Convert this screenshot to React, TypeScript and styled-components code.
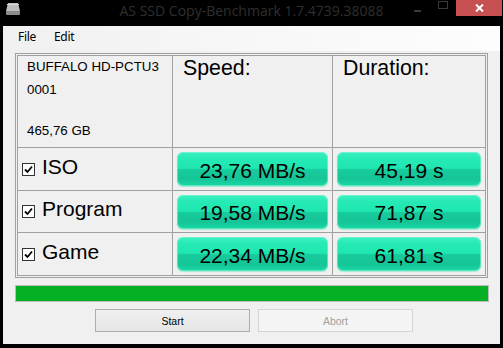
import React from "react";
import styled, { createGlobalStyle } from "styled-components";

const Global = createGlobalStyle`
  html, body { margin: 0; padding: 0; background: #000; }
  body { width: 503px; height: 348px; overflow: hidden; }
`;

const Window = styled.div`
  width: 503px;
  height: 348px;
  background: #000;
  display: flex;
  flex-direction: column;
  font-family: "Liberation Sans", Arial, sans-serif;
`;

const TitleBar = styled.div`
  height: 26px;
  flex: none;
  display: grid;
  grid-template-columns: 1fr auto 1fr;
  align-items: start;
`;

const TitleLeft = styled.div`
  display: flex;
  padding: 2px 0 0 5px;
`;

const TitleText = styled.div`
  font-family: "Open Sans", "Noto Sans", sans-serif;
  font-size: 14px;
  line-height: 19px;
  padding-top: 1px;
  color: #2f2f2f;
  white-space: nowrap;
`;

const Caption = styled.div`
  display: flex;
  justify-content: flex-end;
  padding-right: 1px;
`;

const CapButton = styled.div<{ $w: number; $close?: boolean }>`
  width: ${(p) => p.$w}px;
  height: 16px;
  background: ${(p) => (p.$close ? "#c75050" : "transparent")};
  display: flex;
  align-items: center;
  justify-content: center;
`;

const Client = styled.div`
  flex: 1;
  margin: 0 3px 4px 3px;
  background: #f0f0f0;
  display: flex;
  flex-direction: column;
`;

const MenuBar = styled.div`
  height: 25px;
  flex: none;
  display: flex;
  padding-left: 6px;
  background: linear-gradient(to right, #f0f0f0 0%, #f6f6f6 40%, #fdfdfd 100%);
`;

const MenuItem = styled.div`
  font-family: "Noto Sans", "Open Sans", sans-serif;
  font-size: 12px;
  letter-spacing: -0.3px;
  line-height: 16px;
  padding: 3px 9px 0 9px;
  color: #000;
`;

const Content = styled.div`
  padding: 2px 0 0 12px;
  display: flex;
  flex-direction: column;
`;

const TableFrame = styled.div`
  width: 469px;
  border: 1px solid #a0a0a0;
  padding: 1px;
`;

const Grid = styled.div`
  display: grid;
  grid-template-columns: 154px 159px 152px;
  grid-template-rows: 91px 42px 41px 42px;
  gap: 1px;
  padding: 1px;
  background: #a0a0a0;
`;

const Cell = styled.div`
  background: #f0f0f0;
`;

const DriveCell = styled(Cell)`
  padding: 3px 0 0 9px;
  font-size: 13.33px;
  line-height: 16px;
  color: #000;
`;

const DriveLine = styled.div<{ $gap?: number }>`
  margin-top: ${(p) => p.$gap ?? 0}px;
`;

const HeadCell = styled(Cell)`
  padding-left: 10px;
  font-size: 21.33px;
  line-height: 24px;
  color: #000;
`;

const LabelCell = styled(Cell)`
  display: flex;
  align-items: center;
  padding-left: 4px;
`;

const CheckBox = styled.div`
  width: 11px;
  height: 11px;
  border: 1px solid #333;
  background: #fff;
  display: flex;
  align-items: center;
  justify-content: center;
`;

const Label = styled.div`
  margin: 0 0 5px 7px;
  font-size: 21px;
  line-height: 24px;
  color: #000;
`;

const ValueCell = styled(Cell)`
  display: flex;
  align-items: center;
  padding: 0 4px;
`;

const ValueBox = styled.div`
  flex: 1;
  height: 34px;
  border-radius: 6px;
  display: flex;
  align-items: center;
  justify-content: center;
  font-size: 21px;
  color: #000;
  background: linear-gradient(
    to bottom,
    #3df0c2 0%,
    #26eab5 20%,
    #1fe6b0 48%,
    #17cb9c 52%,
    #15c597 80%,
    #1ad8a6 100%
  );
  box-shadow: inset 0 0 0 1px rgba(150, 245, 215, 0.55), 0 1px 1px rgba(60, 225, 175, 0.45);
`;

const ValueText = styled.span`
  padding-top: 3px;
`;

const Progress = styled.div`
  margin-top: 7px;
  width: 472px;
  height: 15px;
  border: 1px solid #bcbcbc;
  background: #06b025;
`;

const ButtonRow = styled.div`
  margin-top: 7px;
  display: flex;
  gap: 8px;
  padding-left: 80px;
`;

const Button = styled.div<{ $disabled?: boolean }>`
  width: 153px;
  height: 21px;
  border: 1px solid ${(p) => (p.$disabled ? "#d5d5d5" : "#adadad")};
  background: ${(p) =>
    p.$disabled ? "#f4f4f4" : "linear-gradient(to bottom, #f0f0f0, #e5e5e5)"};
  color: ${(p) => (p.$disabled ? "#a0a0a0" : "#000")};
  font-size: 10.5px;
  display: flex;
  align-items: center;
  justify-content: center;
`;

const DriveIcon = () => (
  <svg width="16" height="14" viewBox="0 0 16 14">
    <path d="M3 1 H13 L15 9 H1 Z" fill="#bdbdbd" />
    <rect x="1" y="9" width="14" height="4" rx="1" fill="#8c8c8c" />
    <rect x="2" y="2" width="12" height="1" fill="#d9d9d9" />
  </svg>
);

const Check = () => (
  <svg width="9" height="9" viewBox="0 0 9 9">
    <polyline points="1,4.5 3.5,7 8,1.5" fill="none" stroke="#000" strokeWidth="1.8" />
  </svg>
);

const rows = [
  { name: "ISO", speed: "23,76 MB/s", dur: "45,19 s" },
  { name: "Program", speed: "19,58 MB/s", dur: "71,87 s" },
  { name: "Game", speed: "22,34 MB/s", dur: "61,81 s" },
];

export default function App() {
  return (
    <>
      <Global />
      <Window>
        <TitleBar>
          <TitleLeft>
            <DriveIcon />
          </TitleLeft>
          <TitleText>AS SSD Copy-Benchmark 1.7.4739.38088</TitleText>
          <Caption>
            <CapButton $w={23}>
              <svg width="7" height="16" viewBox="0 0 7 16">
                <rect x="0" y="10" width="7" height="2" fill="#3a3a3a" />
              </svg>
            </CapButton>
            <CapButton $w={27}>
              <svg width="10" height="16" viewBox="0 0 10 16">
                <rect x="0.5" y="1.5" width="9" height="7" fill="none" stroke="#3a3a3a" />
              </svg>
            </CapButton>
            <CapButton $w={46} $close>
              <svg width="9" height="8" viewBox="0 0 9 8">
                <path d="M1 0.5 L8 7.5 M8 0.5 L1 7.5" stroke="#fff" strokeWidth="2" />
              </svg>
            </CapButton>
          </Caption>
        </TitleBar>
        <Client>
          <MenuBar>
            <MenuItem>File</MenuItem>
            <MenuItem>Edit</MenuItem>
          </MenuBar>
          <Content>
            <TableFrame>
              <Grid>
                <DriveCell>
                  <DriveLine>BUFFALO HD-PCTU3</DriveLine>
                  <DriveLine $gap={7}>0001</DriveLine>
                  <DriveLine $gap={25}>465,76 GB</DriveLine>
                </DriveCell>
                <HeadCell>Speed:</HeadCell>
                <HeadCell>Duration:</HeadCell>
                {rows.map((r) => (
                  <React.Fragment key={r.name}>
                    <LabelCell>
                      <CheckBox>
                        <Check />
                      </CheckBox>
                      <Label>{r.name}</Label>
                    </LabelCell>
                    <ValueCell>
                      <ValueBox>
                        <ValueText>{r.speed}</ValueText>
                      </ValueBox>
                    </ValueCell>
                    <ValueCell>
                      <ValueBox>
                        <ValueText>{r.dur}</ValueText>
                      </ValueBox>
                    </ValueCell>
                  </React.Fragment>
                ))}
              </Grid>
            </TableFrame>
            <Progress />
            <ButtonRow>
              <Button>Start</Button>
              <Button $disabled>Abort</Button>
            </ButtonRow>
          </Content>
        </Client>
      </Window>
    </>
  );
}
